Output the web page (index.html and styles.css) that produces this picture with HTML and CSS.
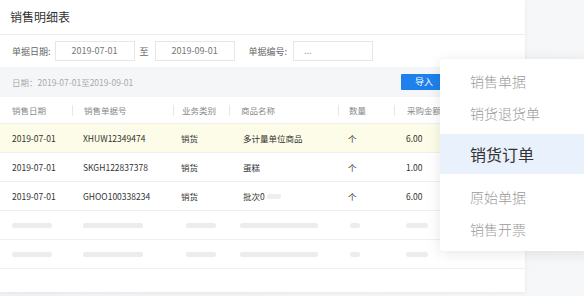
FILE: index.html
```html
<!DOCTYPE html>
<html lang="zh-CN">
<head>
    <meta charset="UTF-8">
    <meta name="viewport" content="width=device-width, initial-scale=1.0">
    <title>销售明细表</title>
    <link rel="stylesheet" href="styles.css">
</head>
<body>
    <div class="card">
        <div class="card-title">销售明细表</div>

        <!-- 筛选 -->
        <div class="filter">
            <span class="label">单据日期:</span>
            <div class="input">2019-07-01</div>
            <span class="label to">至</span>
            <div class="input">2019-09-01</div>
            <span class="label no">单据编号:</span>
            <div class="input input-left">...</div>
        </div>

        <div class="toolbar">
            <span class="range">日期：2019-07-01至2019-09-01</span>
            <button class="btn">导入</button>
        </div>

        <!-- 表格 -->
        <div class="grid">
            <div class="row head">
                <div class="c c1"><span>销售日期</span></div>
                <div class="c c2"><span>销售单据号</span></div>
                <div class="c c3"><span>业务类别</span></div>
                <div class="c c4"><span>商品名称</span></div>
                <div class="c c5"><span>数量</span></div>
                <div class="c c6"><span>采购金额</span></div>
            </div>
            <div class="row hl">
                <div class="c c1">2019-07-01</div>
                <div class="c c2">XHUW12349474</div>
                <div class="c c3">销货</div>
                <div class="c c4 name">多计量单位商品</div>
                <div class="c c5">个</div>
                <div class="c c6">6.00</div>
            </div>
            <div class="row">
                <div class="c c1">2019-07-01</div>
                <div class="c c2">SKGH122837378</div>
                <div class="c c3">销货</div>
                <div class="c c4 name">蛋糕</div>
                <div class="c c5">个</div>
                <div class="c c6">1.00</div>
            </div>
            <div class="row">
                <div class="c c1">2019-07-01</div>
                <div class="c c2">GHOO100338234</div>
                <div class="c c3">销货</div>
                <div class="c c4 name">批次0<i class="sk sk-tail"></i></div>
                <div class="c c5">个</div>
                <div class="c c6">6.00</div>
            </div>
            <div class="row">
                <div class="c c1"><i class="sk w40"></i></div>
                <div class="c c2"><i class="sk w60"></i></div>
                <div class="c c3"><i class="sk w30 ml5"></i></div>
                <div class="c c4"><i class="sk w78"></i></div>
                <div class="c c5"><i class="sk w10 ml2"></i></div>
                <div class="c c6"><i class="sk w22"></i></div>
            </div>
            <div class="row">
                <div class="c c1"><i class="sk w40"></i></div>
                <div class="c c2"><i class="sk w60"></i></div>
                <div class="c c3"><i class="sk w30 ml5"></i></div>
                <div class="c c4"><i class="sk w78"></i></div>
                <div class="c c5"><i class="sk w10 ml2"></i></div>
                <div class="c c6"><i class="sk w22"></i></div>
            </div>
        </div>
    </div>

    <!-- 下拉菜单 -->
    <ul class="menu">
        <li>销售单据</li>
        <li>销货退货单</li>
        <li class="active">销货订单</li>
        <li>原始单据</li>
        <li>销售开票</li>
    </ul>
</body>
</html>
```

FILE: styles.css
```css
* {
    margin: 0;
    padding: 0;
    box-sizing: border-box;
}

body {
    width: 584px;
    height: 296px;
    overflow: hidden;
    position: relative;
    background: linear-gradient(90deg, #f1f2f5, #f6f7f9);
    font-family: "Noto Sans CJK SC", "Noto Sans", sans-serif;
    color: #333;
}

.card {
    width: 525px;
    height: 292px;
    background-color: #fff;
    box-shadow: 0 1px 4px rgba(0, 0, 0, 0.06);
}

.card-title {
    height: 35px;
    line-height: 34px;
    padding-left: 10px;
    font-size: 12px;
    color: #333;
    border-bottom: 1px solid #ececec;
}

/* 筛选 */
.filter {
    height: 32px;
    display: flex;
    align-items: center;
    padding-left: 12px;
}

.label {
    font-size: 9px;
    color: #666;
    margin-right: 4px;
}

.label.to {
    margin: 0 6px 0 5px;
}

.label.no {
    margin: 0 6px 0 14px;
}

.input {
    width: 80px;
    height: 20px;
    border: 1px solid #e6e6e6;
    font-size: 9px;
    line-height: 18px;
    color: #777;
    text-align: center;
}

.input-left {
    text-align: left;
    padding-left: 10px;
    color: #999;
}

.toolbar {
    height: 30px;
    display: flex;
    align-items: center;
    justify-content: space-between;
    padding: 0 78px 0 12px;
    background-color: #f5f6f8;
}

.range {
    font-size: 8.5px;
    color: #aaa;
}

.btn {
    width: 46px;
    height: 16px;
    border: none;
    border-radius: 1px;
    background-color: #1d80ec;
    color: #fff;
    font-family: inherit;
    font-size: 9px;
    line-height: 16px;
}

/* 表格 */
.row {
    display: grid;
    grid-template-columns: 72px 101px 56px 109px 56px 1fr;
    align-items: center;
    height: 29px;
    border-bottom: 1px solid #f0f0f0;
    font-size: 8.5px;
    color: #333;
}

.row.head {
    height: 27px;
    color: #888;
}

.row.hl {
    background-color: #fcfce8;
}

.c {
    white-space: nowrap;
    display: flex;
    align-items: center;
}

.c1 { padding-left: 12px; }
.c2 { padding-left: 11px; }
.c3 { padding-left: 8px; }
.c4 { padding-left: 11px; }
.c5 { padding-left: 10px; }
.c6 { padding-left: 12px; }

.c4.name { padding-left: 14px; }

.head .c2,
.head .c3,
.head .c4,
.head .c5,
.head .c6 {
    border-left: 1px solid #e8e8e8;
    height: 11px;
}

.head span {
    line-height: 11px;
}

.sk {
    display: inline-block;
    height: 5px;
    border-radius: 3px;
    background-color: #ececec;
}

.sk-tail {
    width: 14px;
    margin-left: 2px;
    background-color: #eee;
}

.w40 { width: 40px; }
.w60 { width: 60px; }
.w30 { width: 30px; }
.w78 { width: 78px; }
.w10 { width: 10px; }
.w22 { width: 22px; }
.ml5 { margin-left: 5px; }
.ml2 { margin-left: 2px; }

/* 下拉菜单 */
.menu {
    position: absolute;
    top: 59px;
    left: 440px;
    width: 150px;
    padding: 6px 0;
    list-style: none;
    background-color: #fff;
    border-radius: 4px 0 0 4px;
    box-shadow: 0 2px 14px rgba(0, 0, 0, 0.1);
}

.menu li {
    height: 32px;
    line-height: 32px;
    padding-left: 30px;
    font-size: 14px;
    font-weight: 300;
    color: #9a9a9a;
}

.menu li.active {
    height: 40px;
    line-height: 40px;
    margin: 5px 0 7px;
    font-size: 16px;
    font-weight: 400;
    color: #333;
    background-color: #e9f1fc;
}
```
